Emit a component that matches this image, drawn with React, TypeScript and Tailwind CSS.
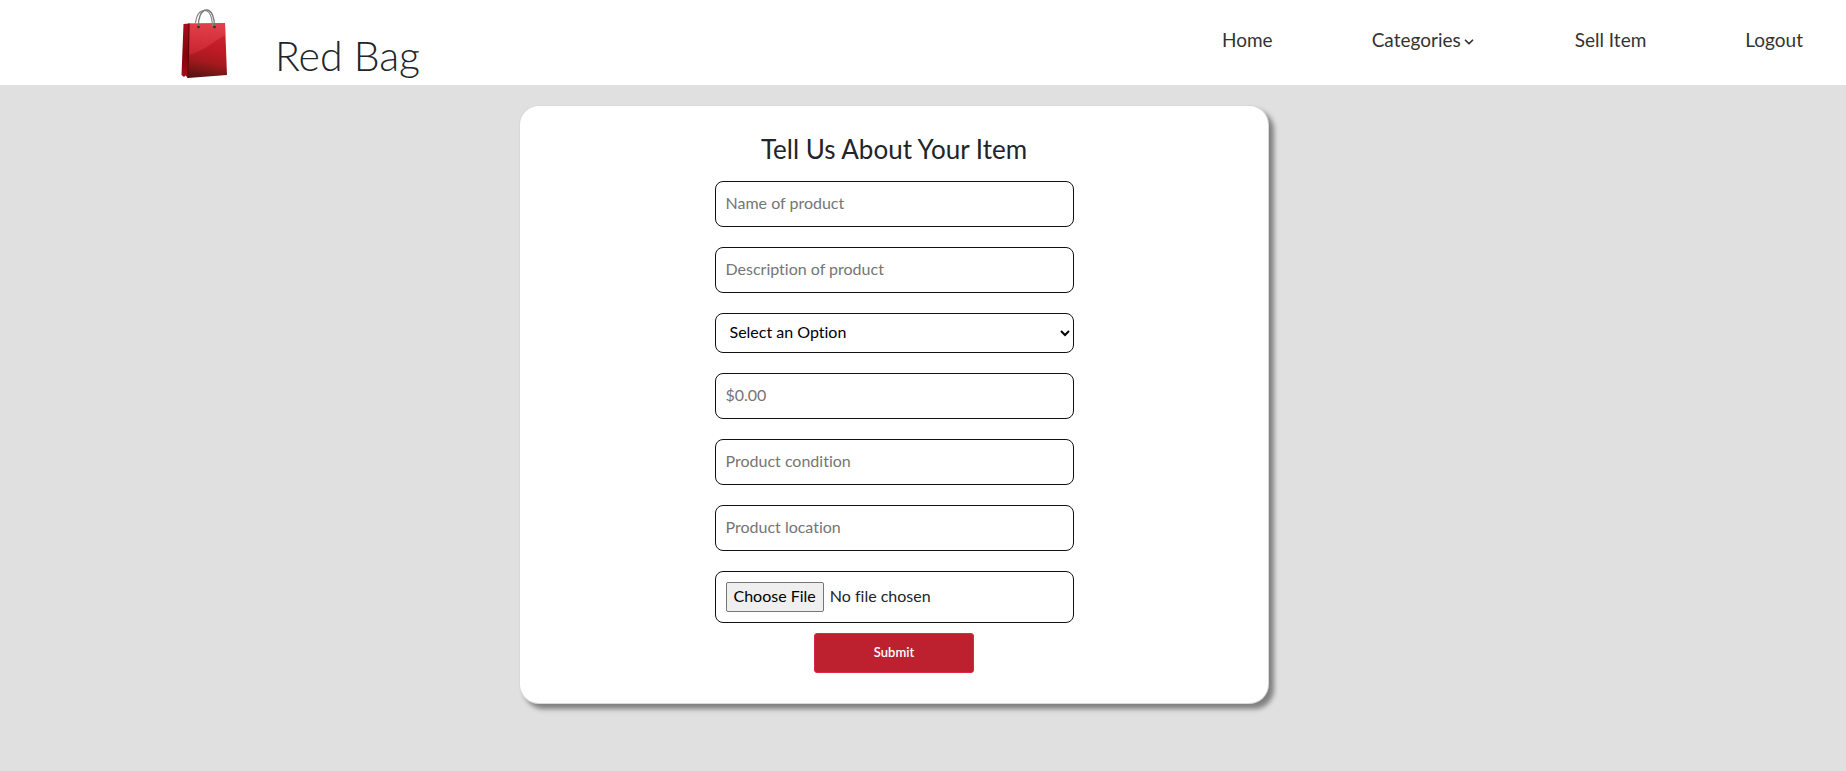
import { ChevronDown } from "lucide-react";

const field =
  "block w-full rounded-lg border border-[#111] bg-white text-base leading-6";
const textField = field + " h-[46px] px-2.5 pb-2 pt-1 placeholder:text-[#757575]";

function BagLogo() {
  return (
    <svg className="h-[70px] w-[46px]" viewBox="0 0 46 70" aria-hidden="true">
      <defs>
        <linearGradient id="front" x1="0.55" y1="0" x2="0.4" y2="1">
          <stop offset="0" stopColor="#cf2733" />
          <stop offset="0.45" stopColor="#bf1b25" />
          <stop offset="0.7" stopColor="#a5191e" />
          <stop offset="1" stopColor="#5a1412" />
        </linearGradient>
        <linearGradient id="gloss" x1="0" y1="0" x2="0" y2="1">
          <stop offset="0" stopColor="#f05560" stopOpacity="0.55" />
          <stop offset="1" stopColor="#e84450" stopOpacity="0.3" />
        </linearGradient>
        <linearGradient id="side" x1="0" y1="0" x2="0" y2="1">
          <stop offset="0" stopColor="#a80f1c" />
          <stop offset="0.6" stopColor="#8b0008" />
          <stop offset="1" stopColor="#a3101b" />
        </linearGradient>
      </defs>
      <path d="M2.500 15L8 14.500L7 69L4.500 66.500L3 68L0.500 66Z" fill="url(#side)" />
      <path d="M8 14.500L44 14L46 66L7 69Z" fill="url(#front)" />
      <path d="M8 14.500L44 14L44.500 26C34 31 22 43 7.500 46Z" fill="url(#gloss)" />
      <path d="M8 14.500L7 69" stroke="#650008" strokeWidth="1.200" />
      <path d="M14.500 14C15.500 6 18.500 1.500 23.500 1.500C28.500 1.500 31 8 31.500 17" fill="none" stroke="#888" strokeWidth="1.200" />
      <path d="M17.500 18C17 9 20 1 25.500 1C31 1 33.500 9 33.500 18" fill="none" stroke="#777" strokeWidth="1.300" />
      <circle cx="17.500" cy="18" r="1.300" fill="#42272b" />
      <circle cx="33.500" cy="18" r="1.300" fill="#42272b" />
    </svg>
  );
}

export default function App() {
  return (
    <div className="min-h-screen bg-[#e0e0e0] font-['Lato',sans-serif] text-[#212529] [font-variant-ligatures:none]">
      <header className="flex h-[85px] items-start justify-between bg-white pl-[181px] pr-[43px]">
        <a href="#home" className="flex items-start gap-12 pt-[9px]">
          <BagLogo />
          <span className="pt-[22px] text-[41px] font-light leading-[50px]">Red Bag</span>
        </a>
        <nav className="flex gap-[99px] pt-7 text-[19px] leading-6 text-[#333]">
          <a href="#home">Home</a>
          <a href="#categories" className="flex items-center gap-px">
            Categories
            <ChevronDown className="mt-1 size-3.5" strokeWidth={3} aria-hidden="true" />
          </a>
          <a href="#sell">Sell Item</a>
          <a href="#logout">Logout</a>
        </nav>
      </header>

      <main className="flex justify-center pb-10 pr-[58px] pt-5">
        <section className="w-full max-w-[750px] rounded-[20px] border border-black/15 bg-white pb-[30px] pt-[27px] shadow-[5px_5px_5px_#808080]">
          <h1 className="text-center text-[26px] leading-8">Tell Us About Your Item</h1>
          <form
            className="mx-auto mt-4 w-[359px] max-w-full"
            onSubmit={(event) => event.preventDefault()}
          >
            <div className="flex flex-col gap-5">
              <input className={textField} type="text" placeholder="Name of product" aria-label="Name of product" />
              <input className={textField} type="text" placeholder="Description of product" aria-label="Description of product" />
              <select className={field + " h-10 px-2.5 pb-1 text-black"} aria-label="Product category" defaultValue="">
                <option value="">Select an Option</option>
                <option value="clothing">Clothing</option>
                <option value="electronics">Electronics</option>
                <option value="home">Home</option>
              </select>
              <input className={textField} type="text" inputMode="decimal" placeholder="$0.00" aria-label="Price" />
              <input className={textField} type="text" placeholder="Product condition" aria-label="Product condition" />
              <input className={textField} type="text" placeholder="Product location" aria-label="Product location" />
              <input
                className={
                  field +
                  " h-[52px] p-2.5 file:mr-1.5 file:h-[30px] file:rounded-xs file:border file:border-solid file:border-[#767676] file:bg-[#efefef] file:px-[7px] file:pb-0.5 file:text-black"
                }
                type="file"
                aria-label="Product image"
              />
            </div>
            <button
              type="submit"
              className="mx-auto mt-2.5 block h-10 w-40 rounded-[3px] border border-[#dc2840] bg-[#bd202e] text-[13px] font-semibold text-white"
            >
              Submit
            </button>
          </form>
        </section>
      </main>
    </div>
  );
}
